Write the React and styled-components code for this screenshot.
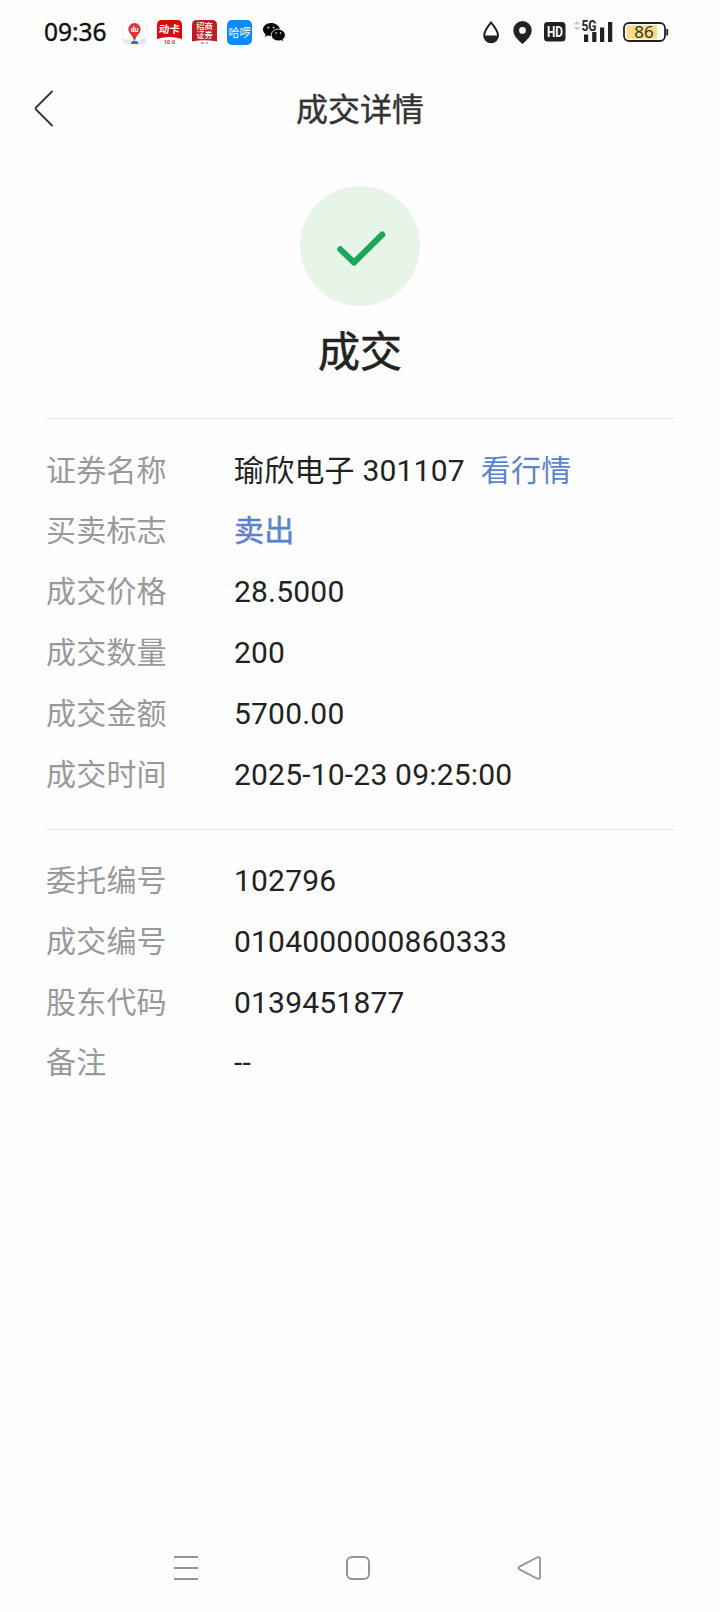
import styled, { createGlobalStyle } from 'styled-components';

const GlobalStyle = createGlobalStyle`
    * {
        box-sizing: border-box;
    }

    body {
        margin: 0;
        background-color: #fefefe;
        font-family: Roboto, 'Noto Sans CJK SC', sans-serif;
        color: #222222;
    }
`;

const Screen = styled.div`
    display: flex;
    flex-direction: column;
    width: 720px;
    height: 1612px;
    overflow: hidden;
`;

const StatusBar = styled.div`
    display: flex;
    align-items: center;
    height: 64px;
    padding: 0 51px 0 44px;
`;

const Clock = styled.span`
    width: 78px;
    font-family: 'Noto Sans', sans-serif;
    font-size: 24.5px;
    font-weight: 400;
    line-height: 64px;
    color: #111111;
    -webkit-text-stroke: 0.4px #111111;
`;

const AppIcons = styled.div`
    display: flex;
    gap: 10px;
`;

const SystemIcons = styled.div`
    display: flex;
    align-items: center;
    margin-left: auto;
`;

const Icon = styled.svg`
    display: block;
    flex: none;
    margin-left: ${(props) => props.$gap || 0}px;
`;

const Header = styled.header`
    display: grid;
    grid-template-columns: 70px 1fr 70px;
    align-items: center;
    height: 88px;
`;

const BackButton = styled.button`
    display: flex;
    padding: 0 0 0 33px;
    border: none;
    background: none;
`;

const Title = styled.h1`
    margin: 0;
    padding-top: 4px;
    font-size: 32px;
    font-weight: 400;
    line-height: 48px;
    text-align: center;
    color: #333333;
    -webkit-text-stroke: 0.4px #333333;
`;

const Result = styled.section`
    display: flex;
    flex-direction: column;
    align-items: center;
    height: 266px;
    padding-top: 34px;
`;

const ResultBadge = styled.div`
    display: flex;
    align-items: center;
    justify-content: center;
    width: 120px;
    height: 120px;
    border-radius: 50%;
    background-color: #e7f5e9;
`;

const ResultText = styled.h2`
    margin: 16px 0 0;
    font-size: 42px;
    font-weight: 400;
    line-height: 62px;
    -webkit-text-stroke: 0.6px #222222;
`;

const Details = styled.dl`
    margin: 0 45px 0 46px;
    padding: ${(props) => props.$top}px 0 24px;
    border-top: 1px solid #ebebeb;
`;

const Row = styled.div`
    display: flex;
    height: ${(props) => (props.$compact ? 60 : 61)}px;
    font-size: 30px;
    line-height: ${(props) => (props.$compact ? 60 : 61)}px;
    letter-spacing: 0.2px;
`;

const Label = styled.dt`
    width: 188px;
    color: #999999;
`;

const Value = styled.dd`
    margin: 0;
    color: ${(props) => (props.$sell ? '#5b84d0' : '#222222')};
    -webkit-text-stroke: ${(props) => (props.$sell ? '0.5px' : '0')};
`;

const QuoteLink = styled.a`
    margin-left: 16px;
    color: #5b84d0;
`;

const NavBar = styled.nav`
    display: flex;
    justify-content: space-between;
    align-items: center;
    height: 88px;
    margin-top: auto;
    padding: 0 177px 0 173px;
`;

const tradeRows = [
    { label: '证券名称', value: '瑜欣电子 301107', link: '看行情', compact: true },
    { label: '买卖标志', value: '卖出', sell: true, compact: true },
    { label: '成交价格', value: '28.5000' },
    { label: '成交数量', value: '200' },
    { label: '成交金额', value: '5700.00' },
    { label: '成交时间', value: '2025-10-23 09:25:00' },
];

const orderRows = [
    { label: '委托编号', value: '102796' },
    { label: '成交编号', value: '0104000000860333' },
    { label: '股东代码', value: '0139451877' },
    { label: '备注', value: '--', compact: true },
];

const MapIcon = () => (
    <Icon width="25" height="25" viewBox="0 0 25 25">
        <rect x="0.5" y="0.5" width="24" height="24" rx="5" fill="#fdfdfd" stroke="#f3f3f3" />
        <path d="M1 19l8 1-1 4H5q-4 0-4-4z" fill="#e2eeda" />
        <path d="M16 20l8-2v2q0 4-4 4h-4z" fill="#dbeaf6" />
        <path d="M8.5 24l1.500-3h5l2 3z" fill="#3b6fc4" />
        <path d="M12.5 21.5Q11.5 17 8.5 14A6.2 6.2 0 1 1 16.5 14Q13.5 17 12.5 21.5z" fill="#e3333b" />
        <text x="12.6" y="12" fontSize="7" fontWeight="700" textAnchor="middle" fill="#ffffff">
            du
        </text>
    </Icon>
);

const CardIcon = () => (
    <Icon width="25" height="25" viewBox="0 0 25 25">
        <path d="M5 0h15q5 0 5 5v14Q12.5 15 0 19V5q0-5 5-5z" fill="#d9090f" />
        <text
            x="12.5"
            y="13.5"
            fontSize="10.5"
            fontWeight="700"
            textAnchor="middle"
            fill="#ffffff"
            transform="skewX(-6) translate(1 0)"
        >
            动卡
        </text>
        <text x="12.5" y="23.5" fontSize="5.5" fontWeight="700" textAnchor="middle" fill="#d9333a">
            10.0
        </text>
    </Icon>
);

const BrokerIcon = () => (
    <Icon width="25" height="25" viewBox="0 0 25 25">
        <path d="M5 0h15q5 0 5 5v16.5Q12.5 19 0 21.5V5q0-5 5-5z" fill="#bd2024" />
        <g fontSize="8.3" fontWeight="500" textAnchor="middle" fill="#ffffff">
            <text x="12.5" y="9.2">
                招商
            </text>
            <text x="12.5" y="17.6">
                证券
            </text>
        </g>
        <path d="M9 23h3m2 0h2" stroke="#c44a4d" />
    </Icon>
);

const BikeIcon = () => (
    <Icon width="25" height="25" viewBox="0 0 25 25">
        <rect width="25" height="25" rx="5" fill="#0f8bf8" />
        <text x="12.5" y="16.6" fontSize="11" textAnchor="middle" fill="#ffffff">
            哈啰
        </text>
    </Icon>
);

const ChatIcon = () => (
    <Icon width="25" height="25" viewBox="0 0 25 25">
        <path
            d="M9 3c-4.800 0-8 3-8 6.500 0 2 1 3.800 2.700 5L3 17l2.800-1.400c1.500.4 2.500.5 4.200.4L18 9C17 5.500 13.500 3 9 3z"
            fill="#0a0a0a"
        />
        <path
            d="M16.300 9.200c3.900 0 7 2.600 7 5.900 0 1.800-.9 3.300-2.300 4.400l.6 2.300-2.500-1.300c-.9.300-1.800.4-2.800.4-3.900 0-7-2.500-7-5.800s3.100-5.900 7-5.900z"
            fill="#0a0a0a"
            stroke="#fefefe"
            strokeWidth="0.8"
        />
        <g fill="#fefefe">
            <circle cx="6.300" cy="7.600" r="0.9" />
            <circle cx="11.600" cy="7.600" r="0.9" />
            <circle cx="14" cy="13" r="0.8" />
            <circle cx="18.600" cy="13" r="0.8" />
        </g>
    </Icon>
);

const DropIcon = () => (
    <Icon width="17" height="23" viewBox="0 0 17 23">
        <path
            d="M8 1.500C5.500 4.800 1.200 9.800 1.200 14.300a6.900 6.900 0 0 0 13.800 0C15 9.800 10.500 4.800 8 1.500z"
            fill="none"
            stroke="#222222"
            strokeWidth="2"
        />
        <path d="M1.200 14.500H15a6.900 6.900 0 0 1-13.800 0z" fill="#222222" />
    </Icon>
);

const PinIcon = () => (
    <Icon width="19" height="23" viewBox="0 0 19 23" $gap={13}>
        <path
            fillRule="evenodd"
            d="M9.500 0A9.200 9.200 0 0 0 .3 9.200C.3 14.500 5 19 9.500 23c4.500-4 9.200-8.500 9.200-13.800A9.200 9.200 0 0 0 9.500 0zm0 6a3.400 3.400 0 1 1 0 6.800 3.400 3.400 0 0 1 0-6.800z"
            fill="#222222"
        />
    </Icon>
);

const HdIcon = () => (
    <Icon width="22" height="20" viewBox="0 0 22 20" $gap={12}>
        <rect width="21.500" height="19.500" rx="3.500" fill="#222222" />
        <text
            x="11"
            y="15"
            fontSize="15"
            fontWeight="700"
            textAnchor="middle"
            textLength="16"
            lengthAdjust="spacingAndGlyphs"
            fill="#ffffff"
        >
            HD
        </text>
    </Icon>
);

const SignalIcon = () => (
    <Icon width="41" height="34" viewBox="0 -5 41 34" $gap={7}>
        <path d="M0.500 4.500L4 1l3.500 3.500zM0.500 7L4 10.500 7.500 7z" fill="#c9c9c9" />
        <text
            x="8.500"
            y="10.500"
            fontSize="14"
            fontWeight="700"
            textLength="15"
            lengthAdjust="spacingAndGlyphs"
            fill="#222222"
        >
            5G
        </text>
        <path
            d="M11 14.500h4.200v7.500H11zM19.200 12h4.200v10h-4.200zM27 7.500h4.200V22H27zM35 2h4.300v20H35z"
            fill="#222222"
        />
    </Icon>
);

const BatteryIcon = () => (
    <Icon width="47" height="22" viewBox="0 0 47 22" $gap={8}>
        <rect x="2" y="2" width="41" height="18" rx="5" fill="none" stroke="#222222" strokeWidth="1.800" />
        <path d="M6.500 4.200h28.500v13.600H6.500q-2 0-2-2V6.200q0-2 2-2z" fill="#ffdc82" />
        <path d="M45.200 8v6.500" stroke="#222222" strokeWidth="1.800" />
        <text
            x="22"
            y="17"
            fontSize="17"
            fontFamily="Noto Sans"
            textAnchor="middle"
            fill="#333333"
        >
            86
        </text>
    </Icon>
);

const DetailList = ({ rows, top }) => (
    <Details $top={top}>
        {rows.map((row) => (
            <Row key={row.label} $compact={row.compact}>
                <Label>{row.label}</Label>
                <Value $sell={row.sell}>
                    {row.value}
                    {row.link && <QuoteLink>{row.link}</QuoteLink>}
                </Value>
            </Row>
        ))}
    </Details>
);

const App = () => {
    return (
        <Screen>
            <GlobalStyle />
            <StatusBar>
                <Clock>09:36</Clock>
                <AppIcons>
                    <MapIcon />
                    <CardIcon />
                    <BrokerIcon />
                    <BikeIcon />
                    <ChatIcon />
                </AppIcons>
                <SystemIcons>
                    <DropIcon />
                    <PinIcon />
                    <HdIcon />
                    <SignalIcon />
                    <BatteryIcon />
                </SystemIcons>
            </StatusBar>
            <Header>
                <BackButton aria-label="返回">
                    <Icon width="21" height="37" viewBox="0 0 21 37">
                        <path
                            d="M19 1.500L3 17.500q-1 1 0 2L19 35.500"
                            fill="none"
                            stroke="#333333"
                            strokeWidth="1.800"
                            strokeLinecap="round"
                        />
                    </Icon>
                </BackButton>
                <Title>成交详情</Title>
            </Header>
            <Result>
                <ResultBadge>
                    <Icon width="60" height="60" viewBox="0 0 60 60">
                        <path
                            d="M10.300 33.300L24 46.500 52.300 18.500"
                            fill="none"
                            stroke="#1aa65b"
                            strokeWidth="6"
                            strokeLinecap="round"
                            strokeLinejoin="round"
                        />
                    </Icon>
                </ResultBadge>
                <ResultText>成交</ResultText>
            </Result>
            <DetailList rows={tradeRows} top={22} />
            <DetailList rows={orderRows} top={20} />
            <NavBar>
                <Icon width="26" height="26" viewBox="0 0 26 26">
                    <path d="M1 2h24M1 13h24M1 24h24" stroke="#949494" strokeWidth="2" />
                </Icon>
                <Icon width="26" height="26" viewBox="0 0 26 26">
                    <rect x="2" y="2" width="22" height="22" rx="5" fill="none" stroke="#949494" strokeWidth="2" />
                </Icon>
                <Icon width="26" height="26" viewBox="0 0 26 26">
                    <path
                        d="M2.500 11.600L20.500 2.300Q23 1.300 23 4v18q0 2.700-2.500 1.700L2.500 14.400q-2-1.400 0-2.800z"
                        fill="none"
                        stroke="#949494"
                        strokeWidth="1.800"
                    />
                </Icon>
            </NavBar>
        </Screen>
    );
};

export default App;
